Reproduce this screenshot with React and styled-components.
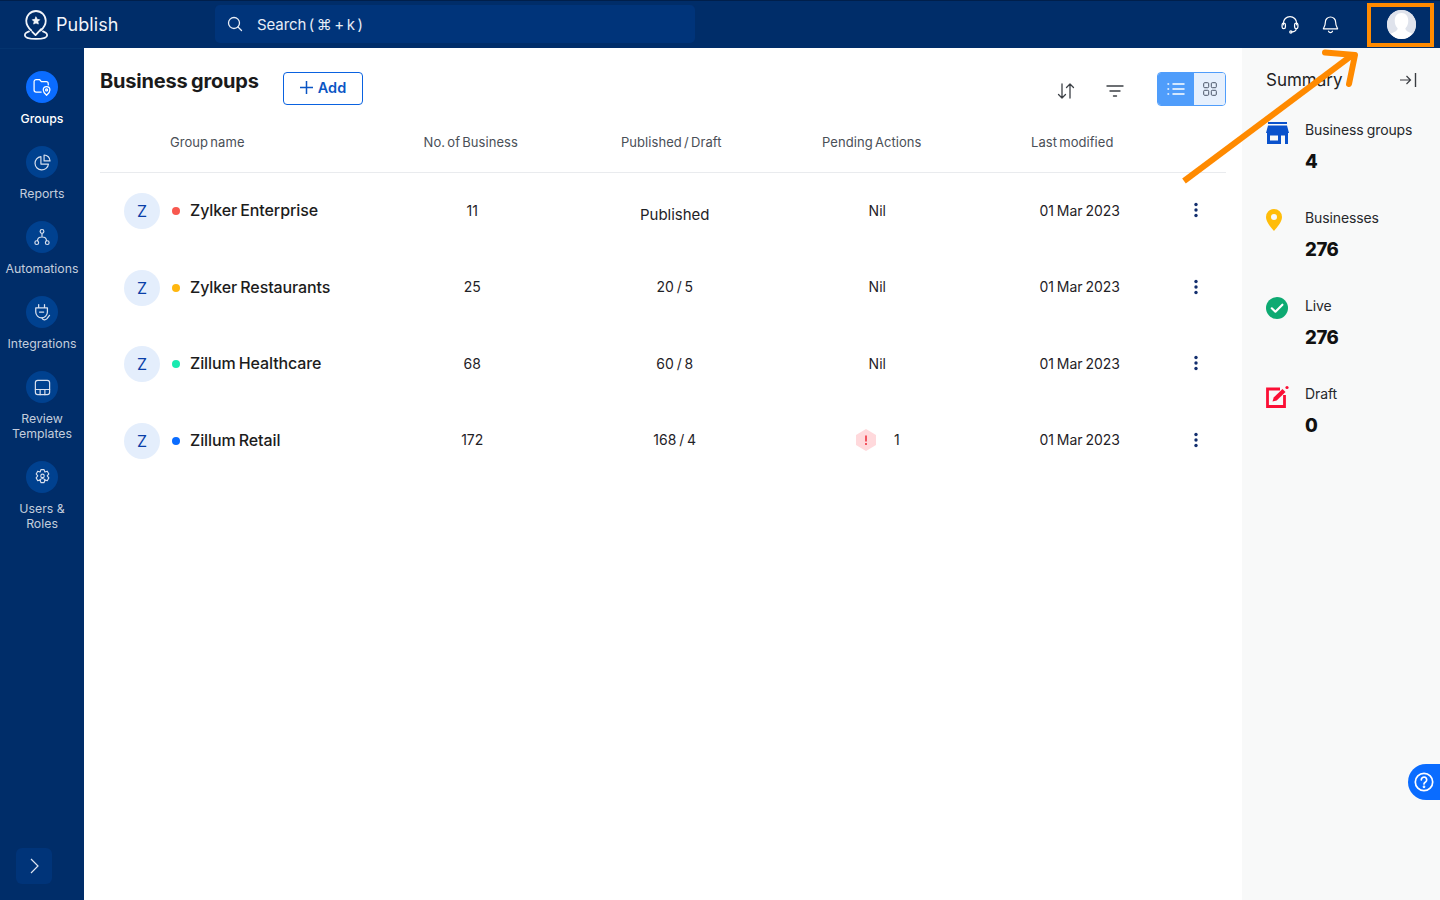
import React from "react";
import styled, { createGlobalStyle } from "styled-components";

const Global = createGlobalStyle`
  html, body { margin: 0; padding: 0; height: 100%; background: #fff; }
  * { box-sizing: border-box; }
  body { font-family: Inter, "Noto Sans", "Liberation Sans", sans-serif; color: #1c1c1c; -webkit-font-smoothing: antialiased; }
`;

const Page = styled.div`position: relative; width: 1440px; height: 900px; overflow: hidden; display: flex; flex-direction: column;`;
const Header = styled.header`
  height: 48px; flex: none; background: #002d69; border-top: 1px solid #001f4b;
  display: flex; align-items: center; padding: 0 0 1px 23px; color: #fff;
`;
const Brand = styled.div`width: 192px; flex: none; display: flex; align-items: center; gap: 7px; font-size: 18px; color: #f2f5fa; letter-spacing: .05px;`;
const Search = styled.div`
  width: 480px; height: 38px; border-radius: 5px; background: #00347a; display: flex; align-items: center;
  padding-left: 12px; gap: 14px; font-size: 15px; color: #e7edf6; word-spacing: -1.5px; letter-spacing: -.1px;
`;
const HeaderIcons = styled.div`margin-left: auto; display: flex; align-items: center; height: 100%;`;
const HeaderIcon = styled.span`display: flex; width: 20px; justify-content: center; margin-right: ${p => p.$mr}px;`;
const HeaderDivider = styled.span`width: 1px; height: 28px; background: #1c3f72; margin-right: 19px;`;
const Avatar = styled.div`width: 29px; height: 29px; border-radius: 50%; background: #dfe3ec; margin-right: 24px; overflow: hidden; display: flex;`;

const Body = styled.div`flex: 1; display: flex; min-height: 0;`;
const Sidebar = styled.nav`
  width: 84px; flex: none; background: #002d69; border-top: 1px solid #04346f; padding-top: 22px;
  display: flex; flex-direction: column; align-items: center; gap: 20px;
`;
const NavItem = styled.div`display: flex; flex-direction: column; align-items: center; gap: 8px; width: 84px;`;
const NavCircle = styled.div`
  width: 32px; height: 32px; border-radius: 50%; display: flex; align-items: center; justify-content: center;
  background: ${p => (p.$active ? "#0a6cff" : "#00418f")};
`;
const NavLabel = styled.div`
  font-size: 12.3px; line-height: 15px; text-align: center; white-space: pre-line;
  color: ${p => (p.$active ? "#fff" : "#c3cddd")}; font-weight: ${p => (p.$active ? 500 : 400)};
`;
const Expand = styled.div`
  margin-top: auto; margin-bottom: 16px; align-self: flex-start; margin-left: 16px; width: 36px; height: 36px; border-radius: 6px; background: #003479;
  display: flex; align-items: center; justify-content: center;
`;

const Main = styled.main`flex: 1; min-width: 0; padding: 24px 16px 0;`;
const TitleRow = styled.div`height: 34px; display: flex; align-items: flex-start;`;
const Title = styled.h1`margin: 0; font-size: 20px; line-height: 18px; font-weight: 700; color: #1a1a1a; letter-spacing: -.2px; word-spacing: -1px; width: 183px;`;
const AddButton = styled.button`
  width: 80px; height: 33px; background: #fff; border: 1px solid #0a62e0; border-radius: 4px; color: #0a55c4;
  font: 600 14.5px Inter, sans-serif; display: flex; align-items: center; justify-content: center; gap: 5px; padding: 0 0 2px;
`;
const Tools = styled.div`margin-left: auto; display: flex; align-items: center; height: 34px;`;
const ToolIcon = styled.span`display: flex; margin-right: ${p => p.$mr}px; padding-top: 3px;`;
const Toggle = styled.div`display: flex; width: 69px; height: 34px; border: 1px solid #4f9dfb; border-radius: 4px; overflow: hidden;`;
const ToggleCell = styled.div`
  flex: ${p => (p.$on ? "0 0 36px" : 1)}; display: flex; align-items: center; justify-content: center;
  background: ${p => (p.$on ? "#4f9dfb" : "#e6f0fd")};
`;
const Head = styled.div`
  display: grid; grid-template-columns: 270.5px repeat(4, 200.5px) 1fr; height: 67px; margin-bottom: -1px; padding-top: 24px;
  border-bottom: 1px solid #e9ebee; font-size: 13px; line-height: 24px; color: #4a4f57; word-spacing: -1.5px; letter-spacing: .06px;
`;
const HeadCell = styled.div`text-align: ${p => (p.$left ? "left" : "center")}; padding-left: ${p => (p.$left ? "70px" : 0)};`;
const Row = styled.div`
  display: grid; grid-template-columns: 271px repeat(4, 202.5px) 1fr; height: 76.5px; align-items: center;
  font-size: 14px; color: #1f2227;
`;
const NameCell = styled.div`display: flex; align-items: center; padding-left: 24px;`;
const Initial = styled.div`
  width: 36px; height: 36px; border-radius: 50%; background: #e4eefc; color: #0a3fa8; font-size: 16px;
  display: flex; align-items: center; justify-content: center; margin: 2px 12px 0 0; flex: none;
`;
const Dot = styled.span`width: 8px; height: 8px; border-radius: 50%; background: ${p => p.$c}; margin: 2px 10px 0 0; flex: none;`;
const Name = styled.div`font-size: 16px; font-weight: 500; color: #1c1c1c; letter-spacing: -.1px; word-spacing: -1px;`;
const Cell = styled.div`
  text-align: center; word-spacing: -1.1px;
  padding-top: ${p => (p.$big ? "8px" : 0)}; font-size: ${p => (p.$big ? "15px" : "14px")};
`;
const PendingCell = styled.div`display: flex; align-items: center; justify-content: center; gap: 17px;`;
const Menu = styled.div`display: flex; padding-left: 12px;`;

const Summary = styled.aside`width: 198px; flex: none; background: #f8f9f9; padding: 0 24px;`;
const SummaryHead = styled.div`height: 65px; padding-bottom: 1px; display: flex; align-items: center; justify-content: space-between; font-size: 17px; color: #1f1f1f;`;
const CollapseIcon = styled.span`display: flex; margin-right: -1px;`;
const Stat = styled.div`display: flex; height: 88px; padding-top: 8px;`;
const StatIcon = styled.div`width: 39px; flex: none; display: flex;`;
const StatLabel = styled.div`font-size: 14px; line-height: 18px; color: #26282c; word-spacing: -.5px; letter-spacing: -.12px;`;
const StatValue = styled.div`font-size: 18.500px; line-height: 24px; font-weight: 800; letter-spacing: -.4px; color: #111; margin-top: 10px;`;

const Help = styled.div`
  position: absolute; right: 0; top: 764px; width: 32px; height: 36px; background: #0a6cff;
  border-radius: 18px 0 0 18px; display: flex; align-items: center; justify-content: center;
`;
const Highlight = styled.div`position: absolute; left: 1367px; top: 3px; width: 67px; height: 44px; border: 4px solid #ff8a00;`;
const ArrowOverlay = styled.svg`position: absolute; left: 1170px; top: 40px; pointer-events: none;`;

const line = { fill: "none", stroke: "currentColor", strokeLinecap: "round", strokeLinejoin: "round" };
const Ico = ({ s = 20, c = "#fff", w = 1.4, children, vb = 24 }) => (
  <svg width={s} height={s} viewBox={`0 0 ${vb} ${vb}`} style={{ color: c }} {...line} strokeWidth={w}>{children}</svg>
);

const navs = [
  { label: "Groups", active: true, icon: (
    <Ico s={20} w={1.5} c="#fff"><path d="M11 18H5a2.5 2.5 0 0 1-2.5-2.5v-10A2.5 2.5 0 0 1 5 3h4l2.2 2.5H17a2.5 2.5 0 0 1 2.5 2.5v1.5" /><path d="M17.5 22s-4-3.4-4-6.5a4 4 0 0 1 8 0c0 3.1-4 6.5-4 6.5z" /><circle cx="17.5" cy="15.5" r="1.2" /></Ico>
  ) },
  { label: "Reports", icon: (
    <Ico s={19} w={1.5} c="#d8e0ee"><path d="M10 4.5a8.5 8.5 0 1 0 9.5 9.5H10z" /><path d="M14 2.500a7.5 7.5 0 0 1 7.5 7.5H14z" /></Ico>
  ) },
  { label: "Automations", icon: (
    <Ico s={18} w={1.6} c="#d8e0ee"><circle cx="12" cy="4.5" r="2.5" /><circle cx="5" cy="19.5" r="2.5" /><circle cx="19" cy="19.5" r="2.5" /><path d="M12 7v5M6 17c0-3 2-5 6-5s6 2 6 5" /></Ico>
  ) },
  { label: "Integrations", icon: (
    <Ico s={20} w={1.5} c="#d8e0ee"><path d="M8 3v4M15 3v4M4.5 7h14v5a7 7 0 0 1-7 7 7 7 0 0 1-7-7z" /><path d="M9 12h5" /><path d="M12 19c1 3 4 3 6 1l3-4" /></Ico>
  ) },
  { label: "Review\nTemplates", icon: (
    <Ico s={19} w={1.5} c="#d8e0ee"><rect x="3" y="3" width="18" height="18" rx="3" /><path d="M3 14.5h18M9 14.5V21M15 14.5V21" /></Ico>
  ) },
  { label: "Users &\nRoles", icon: (
    <Ico s={19} w={1.4} c="#d8e0ee"><path d="M10 2h4l1 3 3-1 2 3.5-2 2.5 2 2.5-2 3.5-3-1-1 3.500h-4l-1-3.500-3 1-2-3.500 2-2.500-2-2.500 2-3.500 3 1z" /><circle cx="12" cy="10" r="2.200" /><path d="M8.5 16c.5-2 2-2.700 3.500-2.700s3 .7 3.500 2.700" /></Ico>
  ) },
];

const rows = [
  { name: "Zylker Enterprise", dot: "#f8584f", n: "11", pub: "Published", big: true },
  { name: "Zylker Restaurants", dot: "#ffb70f", n: "25", pub: "20 / 5" },
  { name: "Zillum Healthcare", dot: "#19eab0", n: "68", pub: "60 / 8" },
  { name: "Zillum Retail", dot: "#0a6cff", n: "172", pub: "168 / 4", pending: true },
];

const stats = [
  { label: "Business groups", value: "4", icon: (
    <svg width="23" height="23" viewBox="0 0 23 23">
      <rect x="2" y="1" width="19" height="2" fill="#0a52cc" />
      <path d="M2 4.500h19l2 7.500H0z" fill="#0a52cc" />
      <path fillRule="evenodd" d="M1 12h21v11H1zM4 14.500v5h8v-5zM15 14.500V23h4v-8.500z" fill="#0a52cc" />
    </svg>
  ) },
  { label: "Businesses", value: "276", icon: (
    <svg width="16" height="22" viewBox="0 0 16 22"><path fillRule="evenodd" d="M8 0a8 8 0 0 1 8 8c0 5-5 10.500-8 14C5 18.500 0 13 0 8a8 8 0 0 1 8-8zm0 5a3 3 0 1 0 0 6 3 3 0 0 0 0-6z" fill="#ffbd0a" /></svg>
  ) },
  { label: "Live", value: "276", icon: (
    <svg width="22" height="22" viewBox="0 0 22 22"><circle cx="11" cy="11" r="11" fill="#0daa72" /><path d="M5.800 11.300l3.600 3.400 7-7" fill="none" stroke="#fff" strokeWidth="2.200" strokeLinecap="round" strokeLinejoin="round" /></svg>
  ) },
  { label: "Draft", value: "0", icon: (
    <svg width="23" height="23" viewBox="0 0 23 23">
      <path d="M14 4H1.500v17.500h17V10" fill="none" stroke="#fb0f35" strokeWidth="2.800" />
      <path d="M6.500 16.500l1.200-4L16.500 4l3 3-8.800 8.500z" fill="#fb0f35" />
      <circle cx="21" cy="2.500" r="1.600" fill="#fb0f35" />
    </svg>
  ) },
];

export default function App() {
  return (
    <Page>
      <Global />
      <Header>
        <Brand>
          <svg width="26" height="32" viewBox="0 0 28 34" fill="none" stroke="#f2f5fa" strokeWidth="1.900" strokeLinecap="round" strokeLinejoin="round">
            <path d="M9 24C5 20.500 3.500 17 3.500 13.500a10.500 10.500 0 0 1 21 0C24.500 17 23 20.500 19 24" />
            <path d="M14 9.500l1.300 2.500 2.700.4-2 2 .5 2.700-2.500-1.300-2.500 1.300.5-2.700-2-2 2.700-.4z" fill="#f2f5fa" strokeWidth=".8" />
            <path d="M10 25.500l3.500 3.500 6-6.500" />
            <path d="M6.500 25C3.500 26 2 27.500 2 29c0 2.500 5 4 12 4s12-1.500 12-4c0-1.500-1.500-3-4.500-4" />
          </svg>
          Publish
        </Brand>
        <Search>
          <svg width="16" height="16" viewBox="0 0 16 16" fill="none" stroke="#e7edf6" strokeWidth="1.300" strokeLinecap="round"><circle cx="7" cy="7" r="5.500" /><path d="M11 11l3.500 3.500" /></svg>
          <span>Search ( ⌘ + k )</span>
        </Search>
        <HeaderIcons>
          <HeaderIcon $mr={20}>
            <Ico s={20} w={1.500} c="#fff"><path d="M4 13v-2a8 8 0 0 1 16 0v2" /><rect x="2.500" y="11" width="4" height="6.500" rx="2" /><rect x="17.500" y="11" width="4" height="6.500" rx="2" /><path d="M19.500 17.500c0 2.500-2.500 4-5 4" /><circle cx="13" cy="21.500" r="1.300" /></Ico>
          </HeaderIcon>
          <HeaderIcon $mr={27}>
            <Ico s={19} w={1.500} c="#fff"><path d="M12 2.500a6.500 6.500 0 0 1 6.500 6.500c0 5 2.500 7.500 2.500 8.500H3c0-1 2.500-3.500 2.500-8.500A6.500 6.500 0 0 1 12 2.500z" /><path d="M9.500 20.500a2.700 2.700 0 0 0 5 0" /></Ico>
          </HeaderIcon>
          <HeaderDivider />
          <Avatar>
            <svg width="29" height="29" viewBox="0 0 30 30"><rect width="30" height="30" fill="#dfe3ec" /><path d="M15 3c4.500 0 7 3.500 7 8 0 3-1 6-3 8 0 2 1.500 3 4 4l3 1.500C23.500 28 19.500 30 15 30S6.500 28 4 24.500L7 23c2.500-1 4-2 4-4-2-2-3-5-3-8 0-4.500 2.500-8 7-8z" fill="#fff" /></svg>
          </Avatar>
        </HeaderIcons>
      </Header>
      <Body>
        <Sidebar>
          {navs.map(n => (
            <NavItem key={n.label}>
              <NavCircle $active={n.active}>{n.icon}</NavCircle>
              <NavLabel $active={n.active}>{n.label}</NavLabel>
            </NavItem>
          ))}
          <Expand>
            <svg width="12" height="16" viewBox="0 0 12 16" fill="none" stroke="#dfe6f2" strokeWidth="1.200"><path d="M3 1l7 7-7 7" /></svg>
          </Expand>
        </Sidebar>
        <Main>
          <TitleRow>
            <Title>Business groups</Title>
            <AddButton>
              <svg width="13" height="13" viewBox="0 0 13 13" stroke="#0a55c4" strokeWidth="1.500"><path d="M6.500 0v13M0 6.500h13" /></svg>
              Add
            </AddButton>
            <Tools>
              <ToolIcon $mr={31}>
                <svg width="18" height="18" viewBox="0 0 18 18" fill="none" stroke="#3c4046" strokeWidth="1.300" strokeLinecap="round" strokeLinejoin="round"><path d="M5 2v14M1.500 12.500L5 16l3.500-3.500M13 16V2M9.500 5.500L13 2l3.500 3.500" /></svg>
              </ToolIcon>
              <ToolIcon $mr={33}>
                <svg width="18" height="14" viewBox="0 0 18 14" stroke="#3c4046" strokeWidth="1.400" strokeLinecap="round"><path d="M1 2h16M4 7h10M7.500 12h3" /></svg>
              </ToolIcon>
              <Toggle>
                <ToggleCell $on>
                  <svg width="18" height="14" viewBox="0 0 18 14" stroke="#fff" strokeWidth="1.500" strokeLinecap="round"><path d="M6 2h11M6 7h11M6 12h11M1 2h.6M1 7h.6M1 12h.6" /></svg>
                </ToggleCell>
                <ToggleCell>
                  <svg width="14" height="14" viewBox="0 0 14 14" fill="none" stroke="#4a5568" strokeWidth="1"><rect x=".7" y=".7" width="5" height="5" rx="1" /><rect x="8.300" y=".7" width="5" height="5" rx="1" /><rect x=".7" y="8.300" width="5" height="5" rx="1" /><rect x="8.300" y="8.300" width="5" height="5" rx="1" /></svg>
                </ToggleCell>
              </Toggle>
            </Tools>
          </TitleRow>
          <Head>
            <HeadCell $left>Group name</HeadCell>
            <HeadCell>No. of Business</HeadCell>
            <HeadCell>Published / Draft</HeadCell>
            <HeadCell>Pending Actions</HeadCell>
            <HeadCell>Last modified</HeadCell>
          </Head>
          {rows.map(r => (
            <Row key={r.name}>
              <NameCell>
                <Initial>Z</Initial>
                <Dot $c={r.dot} />
                <Name>{r.name}</Name>
              </NameCell>
              <Cell>{r.n}</Cell>
              <Cell $big={r.big}>{r.pub}</Cell>
              {r.pending ? (
                <PendingCell>
                  <svg width="22" height="24" viewBox="0 0 22 24"><path d="M11 1l10 6v10l-10 6-10-6V7z" fill="#ffd9dc" /><rect x="10" y="7.500" width="2" height="6" fill="#f2545f" /><rect x="10" y="15" width="2" height="2" fill="#f2545f" /></svg>
                  <span>1</span>
                </PendingCell>
              ) : <Cell>Nil</Cell>}
              <Cell>01 Mar 2023</Cell>
              <Menu>
                <svg width="6" height="16" viewBox="0 0 6 16" fill="#132f6e"><circle cx="3" cy="2.500" r="1.700" /><circle cx="3" cy="8" r="1.700" /><circle cx="3" cy="13.500" r="1.700" /></svg>
              </Menu>
            </Row>
          ))}
        </Main>
        <Summary>
          <SummaryHead>
            Summary
            <CollapseIcon>
              <svg width="18" height="16" viewBox="0 0 18 16" fill="none" stroke="#3a3d42" strokeWidth="1.200"><path d="M1 8h10M7.500 4L11.500 8l-4 4" /><path d="M16.500 1v14" strokeWidth="1.400" /></svg>
            </CollapseIcon>
          </SummaryHead>
          {stats.map(s => (
            <Stat key={s.label}>
              <StatIcon>{s.icon}</StatIcon>
              <div>
                <StatLabel>{s.label}</StatLabel>
                <StatValue>{s.value}</StatValue>
              </div>
            </Stat>
          ))}
        </Summary>
      </Body>
      <Help>
        <svg width="20" height="20" viewBox="0 0 20 20" fill="none" stroke="#fff" strokeWidth="1.700" strokeLinecap="round"><circle cx="10" cy="10" r="8.700" /><path d="M7.300 7.800A2.700 2.700 0 1 1 11.500 10c-1 .6-1.500 1-1.500 2" /><circle cx="10" cy="14.800" r=".5" /></svg>
      </Help>
      <Highlight />
      <ArrowOverlay width="200" height="150" viewBox="0 0 200 150" fill="none" stroke="#ff8a00" strokeLinejoin="round">
        <path d="M14 141L181 16" strokeWidth="6" />
        <path d="M155 12.500L185 15L179 44" strokeWidth="6" strokeLinecap="round" />
      </ArrowOverlay>
    </Page>
  );
}
